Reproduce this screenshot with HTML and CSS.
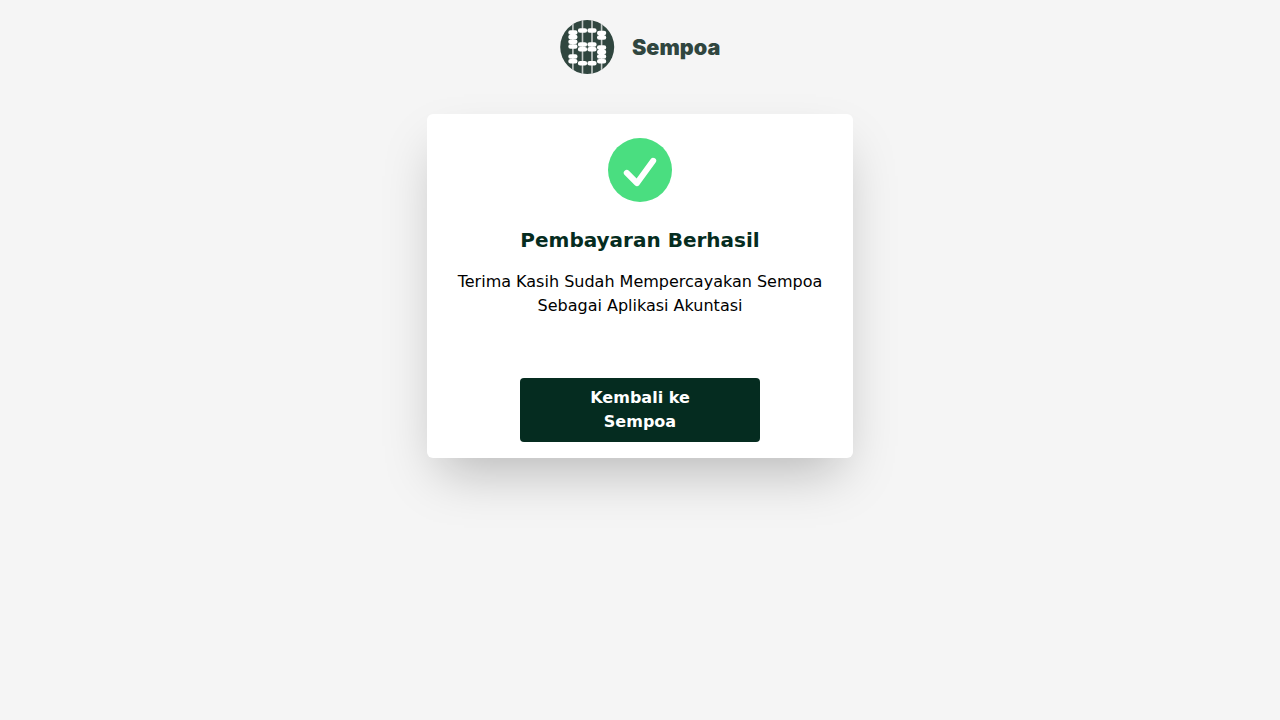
FILE: index.html
```html
<!DOCTYPE html>
<html lang="id">
<head>
<meta charset="utf-8">
<title>Pembayaran Berhasil</title>
<link rel="stylesheet" href="styles.css">
</head>
<body>
<header class="header">
  <svg class="logo" viewBox="0 0 160 54" role="img" aria-label="Sempoa">
    <circle class="logo-disc" cx="27.2" cy="27" r="27"/>
    <path class="logo-rods" d="M12.9 4V50M22.5 0V54M32 0V54M41.6 4V50"/>
    <path class="logo-beads" d="M10.5 12.5h4.8M10.5 17.1h4.8M10.5 21.8h4.8M10.5 26.5h4.8M10.5 36.6h4.8M10.5 41.2h4.8
      M20.1 10.5h4.8M20.1 24.6h4.8M20.1 29.2h4.8M20.1 43.3h4.8
      M29.6 10.5h4.8M29.6 24.6h4.8M29.6 29.2h4.8M29.6 43.3h4.8
      M39.2 12.9h4.8M39.2 17.6h4.8M39.2 27.4h4.8M39.2 32h4.8M39.2 36.6h4.8M39.2 41.2h4.8"/>
    <text class="logo-name" x="72" y="34.5" textLength="88.3" lengthAdjust="spacingAndGlyphs">Sempoa</text>
  </svg>
</header>
<main class="card">
  <svg class="check" viewBox="0 0 64 64" aria-hidden="true">
    <circle class="check-disc" cx="32" cy="32" r="32"/>
    <path class="check-mark" d="M18.8 34.9L29 45.1L45.2 22.8"/>
  </svg>
  <h1 class="title">Pembayaran Berhasil</h1>
  <p class="message">Terima Kasih Sudah Mempercayakan Sempoa Sebagai Aplikasi Akuntasi</p>
  <a class="button" href="#">Kembali ke Sempoa</a>
</main>
</body>
</html>
```
FILE: styles.css
```css
* {
  box-sizing: border-box;
}

body {
  margin: 0;
  min-height: 100vh;
  background: #f5f5f5;
  color: #000;
  font: 16px/24px "DejaVu Sans", sans-serif;
  display: flex;
  flex-direction: column;
  align-items: center;
}

.header {
  padding: 20px 0 40px;
}

.logo {
  display: block;
  width: 160px;
  height: 54px;
  overflow: visible;
}

.logo-disc {
  fill: #30463f;
}

.logo-rods {
  fill: none;
  stroke: #c5cbc9;
  stroke-width: 1.6;
}

.logo-beads {
  fill: none;
  stroke: #fff;
  stroke-width: 4.5;
  stroke-linecap: round;
}

.logo-name {
  fill: #30463f;
  font: 900 21px "Inter", sans-serif;
}

.card {
  width: 426px;
  height: 344px;
  padding: 24px 24px 16px;
  display: flex;
  flex-direction: column;
  align-items: center;
  text-align: center;
  background: #fff;
  border-radius: 6px;
  box-shadow: 0 25px 50px -12px rgba(0, 0, 0, 0.25);
}

.check {
  width: 64px;
  height: 64px;
}

.check-disc {
  fill: #4ade80;
}

.check-mark {
  fill: none;
  stroke: #fff;
  stroke-width: 6;
  stroke-linecap: round;
  stroke-linejoin: round;
}

.title {
  margin: 24px 0 16px;
  color: #052c20;
  font-size: 20px;
  line-height: 28px;
  font-weight: 700;
}

.message {
  margin: 0;
}

.button {
  width: 240px;
  margin-top: auto;
  padding: 8px 64px;
  background: #052c20;
  border-radius: 4px;
  color: #fff;
  font-weight: 700;
  text-decoration: none;
}
```
